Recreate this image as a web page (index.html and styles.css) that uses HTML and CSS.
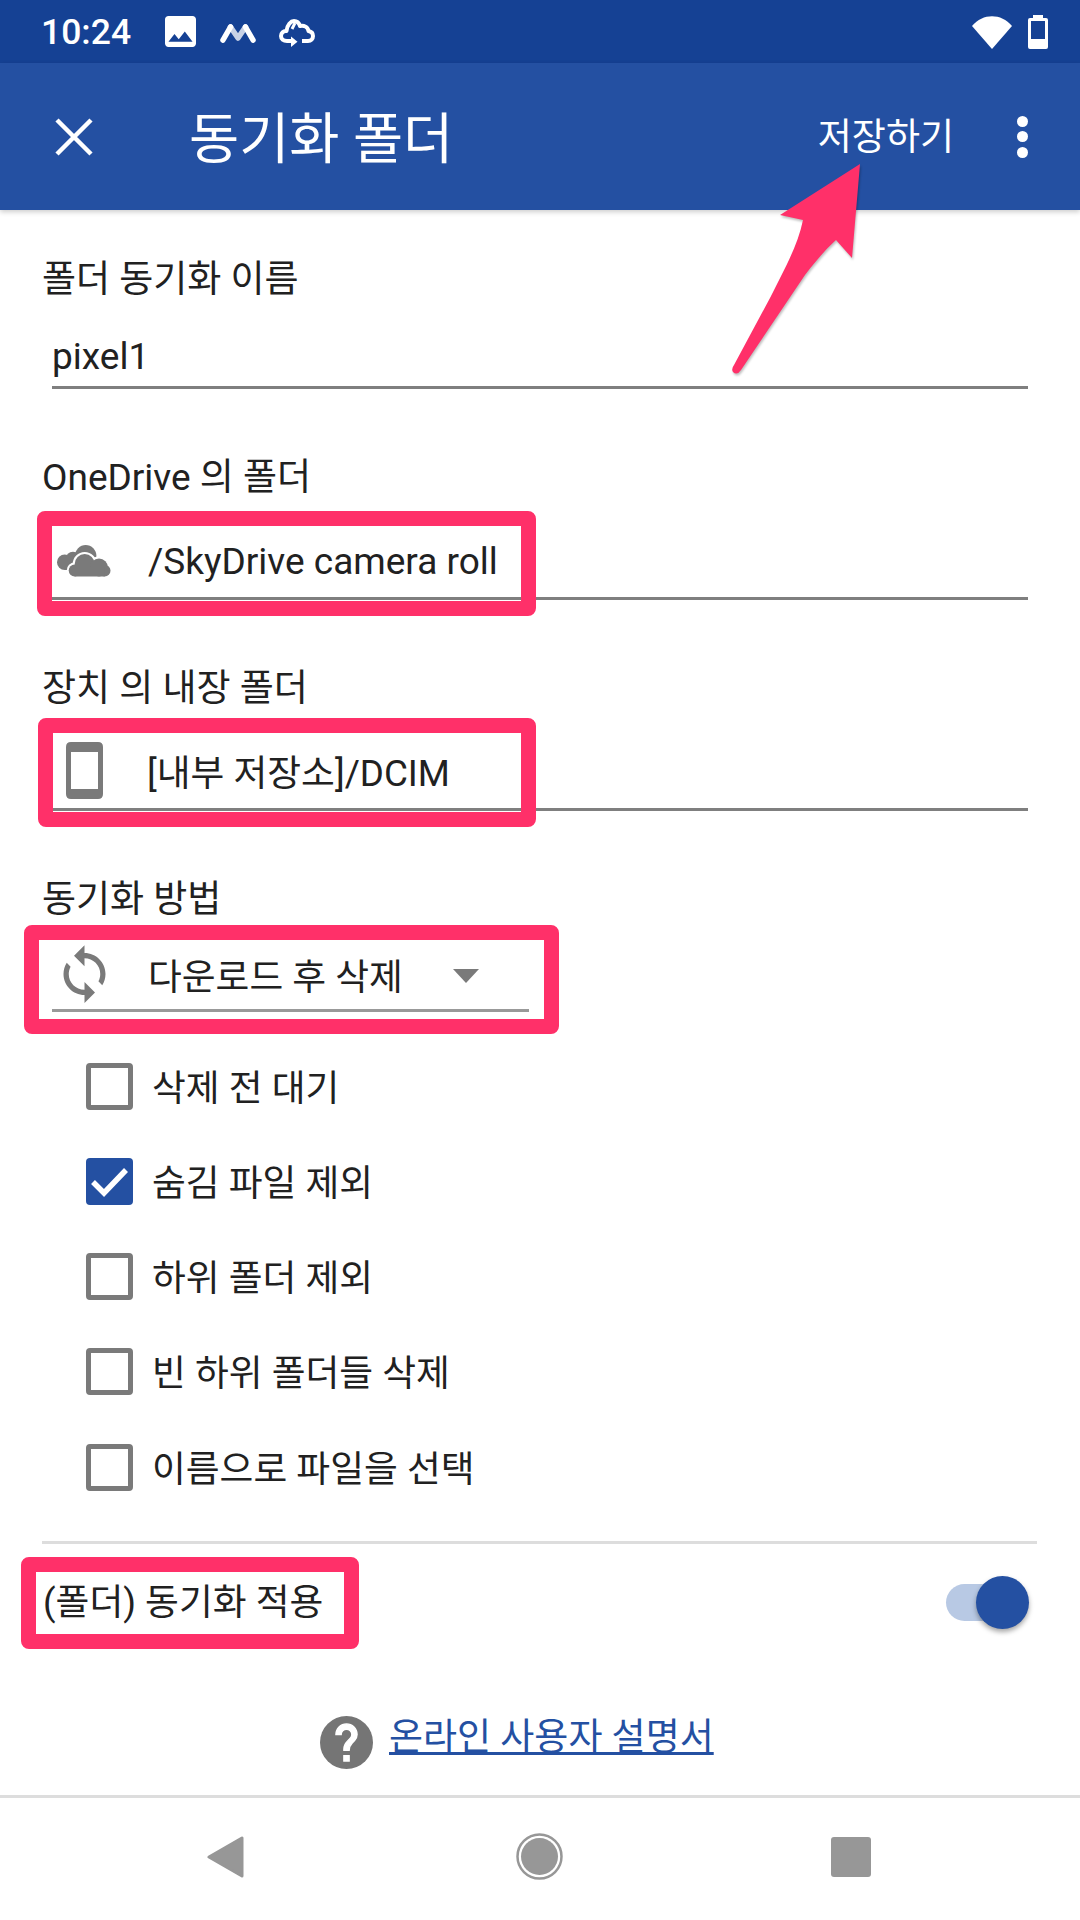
FILE: index.html

```html
<!DOCTYPE html>
<html lang="ko">
<head>
  <meta charset="UTF-8" />
  <meta name="viewport" content="width=device-width, initial-scale=1.0"/>
  <title>동기화 폴더</title>
  <link rel="stylesheet" href="styles.css">
</head>
<body>

  <div class="status-bar">
    <span class="clock">10:24</span>
    <svg class="st-image" viewBox="3 3 18 18"><path fill="#fff" fill-rule="evenodd" d="M21 19V5c0-1.100-.9-2-2-2H5c-1.100 0-2 .9-2 2v14c0 1.100.9 2 2 2h14c1.100 0 2-.9 2-2zM8.500 13.500l2.500 3.010L14.500 12l4.500 6H5l3.500-4.500z"/></svg>
    <svg class="st-m" viewBox="0 0 36 22" fill="none" stroke-width="5.500" stroke-linecap="round" stroke-linejoin="round">
      <path stroke="#c8d2e6" d="M10.500 6L18 17L25.500 6"/>
      <path stroke="#fff" d="M3 19L10.500 6"/>
      <path stroke="#fff" d="M33 19L25.500 6"/>
    </svg>
    <svg class="st-cloud" viewBox="0 0 36 30" fill="none" stroke="#fff" stroke-width="4" stroke-linejoin="round">
      <path d="M12 24H8C4.500 24 2 22 2 19C2 16 4.500 13.500 7.500 14C8 8 12 4 15 4C18 4 20 6 21 9C25 8 29 10 29.500 14C32 14.500 34 16.500 34 19C34 22 32 24 29 24H23"/>
      <path stroke-width="3" d="M16 6L13 12"/>
      <path fill="#fff" stroke="none" d="M12 19.500L18.500 24.800L12 30Z"/>
    </svg>
    <div class="status-right">
      <svg class="st-wifi" viewBox="0 0 40 34"><path fill="#fff" d="M0 11C11 -2 29 -2 40 11L20 34Z"/></svg>
      <svg class="st-battery" viewBox="0 0 20 34"><path fill="#fff" fill-rule="evenodd" d="M5 0H15V3H18Q20 3 20 5V32Q20 34 18 34H2Q0 34 0 32V5Q0 3 2 3H5ZM3 6V24H17V6Z"/></svg>
    </div>
  </div>

  <div class="app-bar">
    <svg class="close-icon" viewBox="0 0 38 38" fill="none" stroke="#fff" stroke-width="4.500"><path d="M2 2L36 36M36 2L2 36"/></svg>
    <span class="app-title">동기화 폴더</span>
    <span class="app-action">저장하기</span>
    <div class="more-dots"><i></i><i></i><i></i></div>
  </div>

  <div class="form">
    <div class="field field-name">
      <div class="field-label">폴더 동기화 이름</div>
      <div class="input">pixel1</div>
    </div>

    <div class="field field-cloud">
      <div class="field-label">OneDrive 의 폴더</div>
      <div class="input">
        <div class="input-icon">
          <svg width="54" height="32" viewBox="0 0 54 32" fill="#7a7a7a">
            <defs>
              <g id="front-cloud">
                <circle cx="17.700" cy="25.500" r="6"/>
                <circle cx="27.700" cy="19" r="10"/>
                <circle cx="42" cy="22.500" r="9"/>
                <circle cx="47.700" cy="25.700" r="5.800"/>
                <rect x="17.700" y="22" width="30" height="9.500"/>
              </g>
            </defs>
            <circle cx="7.700" cy="17.300" r="7.700"/>
            <circle cx="16" cy="14" r="7.300"/>
            <circle cx="28.700" cy="10.700" r="10.700"/>
            <rect x="8" y="14" width="24" height="11"/>
            <use href="#front-cloud" stroke="#fff" stroke-width="4"/>
            <use href="#front-cloud"/>
          </svg>
        </div>
        <span>/SkyDrive camera roll</span>
      </div>
    </div>

    <div class="field field-device">
      <div class="field-label">장치 의 내장 폴더</div>
      <div class="input">
        <div class="input-icon">
          <svg width="37" height="57" viewBox="0 0 37 57"><path fill="#7a7a7a" fill-rule="evenodd" d="M5 0H32Q37 0 37 5V52Q37 57 32 57H5Q0 57 0 52V5Q0 0 5 0ZM5 10V47H32V10Z"/></svg>
        </div>
        <span class="value-ko">[내부 저장소]/DCIM</span>
      </div>
    </div>

    <div class="field field-method">
      <div class="field-label">동기화 방법</div>
      <div class="input">
        <div class="input-icon">
          <svg class="sync-icon" width="64" height="64" viewBox="0 0 24 24"><path fill="#7a7a7a" d="M12 4V1L8 5l4 4V6c3.310 0 6 2.690 6 6 0 1.010-.25 1.970-.7 2.800l1.460 1.460C19.540 15.030 20 13.570 20 12c0-4.420-3.580-8-8-8zm0 14c-3.310 0-6-2.690-6-6 0-1.010.25-1.970.7-2.800L5.240 7.740C4.460 8.970 4 10.430 4 12c0 4.420 3.580 8 8 8v3l4-4-4-4v3z"/></svg>
        </div>
        <span class="method-value">다운로드 후 삭제</span>
        <i class="select-arrow"></i>
      </div>
    </div>

    <div class="checks">
      <div class="check-row"><i class="checkbox"></i><span>삭제 전 대기</span></div>
      <div class="check-row">
        <i class="checkbox checked">
          <svg width="47" height="47" viewBox="0 0 47 47" fill="none" stroke="#fff" stroke-width="5.500"><path d="M7 24L18 35L40 12"/></svg>
        </i><span>숨김 파일 제외</span>
      </div>
      <div class="check-row"><i class="checkbox"></i><span>하위 폴더 제외</span></div>
      <div class="check-row"><i class="checkbox"></i><span>빈 하위 폴더들 삭제</span></div>
      <div class="check-row"><i class="checkbox"></i><span>이름으로 파일을 선택</span></div>
    </div>

    <div class="divider"></div>

    <div class="toggle-row">
      <span class="toggle-label">(폴더) 동기화 적용</span>
      <div class="switch"><i class="switch-track"></i><i class="switch-thumb"></i></div>
    </div>
  </div>

  <div class="help">
    <svg width="53" height="53" viewBox="2 2 20 20">
      <circle cx="12" cy="12" r="10" fill="#757575"/>
      <path fill="#fff" stroke="#fff" stroke-width=".5" d="M13 19h-2v-2h2v2zm2.070-7.750l-.9.920C13.450 12.900 13 13.500 13 15h-2v-.5c0-1.100.45-2.100 1.170-2.830l1.240-1.260c.37-.36.59-.86.59-1.410 0-1.100-.9-2-2-2s-2 .9-2 2H8c0-2.210 1.790-4 4-4s4 1.790 4 4c0 .88-.36 1.680-.93 2.250z"/>
    </svg>
    <a class="help-link">온라인 사용자 설명서</a>
  </div>

  <div class="nav-bar">
    <svg class="nav-back" viewBox="0 0 37 42"><path fill="#979797" stroke="#979797" stroke-width="3" stroke-linejoin="round" d="M35 2V40L2 21Z"/></svg>
    <svg class="nav-home" viewBox="0 0 47 47">
      <circle cx="23.500" cy="23.500" r="22" fill="none" stroke="#979797" stroke-width="2.500"/>
      <circle cx="23.500" cy="23.500" r="18.500" fill="#979797"/>
    </svg>
    <i class="nav-recent"></i>
  </div>

  <!-- annotations drawn over the screenshot -->
  <i class="mark mark-onedrive"></i>
  <i class="mark mark-device"></i>
  <i class="mark mark-method"></i>
  <i class="mark mark-apply"></i>
  <svg class="pointer-arrow" viewBox="700 150 180 240">
    <path fill="#ff3069" d="M860 164L852 258L836 240C825 250 815 262 805 275L741 370Q737 376 733 372Q731 369 734 365L770 298C785 268 798 245 803 220L780 215Z"/>
  </svg>

</body>
</html>
```

FILE: styles.css

```css
html, body {
  margin: 0;
  padding: 0;
}
body {
  position: relative;
  width: 1080px;
  height: 1920px;
  overflow: hidden;
  background: #fff;
  color: #212121;
  font-family: Roboto, "Noto Sans CJK KR", sans-serif;
  font-size: 37px;
}
i {
  display: block;
  font-style: normal;
}

/* status bar */
.status-bar {
  display: flex;
  align-items: center;
  height: 63px;
  padding: 0 30px 0 41px;
  background: #154194;
  color: #fff;
}
.clock {
  width: 90px;
  font-size: 35.500px;
  font-weight: 500;
}
.st-image {
  width: 31px;
  height: 31px;
  margin-left: 34px;
}
.st-m {
  width: 36px;
  height: 22px;
  margin-left: 24px;
}
.st-cloud {
  width: 36px;
  height: 30px;
  margin-left: 23px;
}
.status-right {
  display: flex;
  align-items: center;
  gap: 16px;
  margin-left: auto;
}
.st-wifi {
  width: 40px;
  height: 34px;
}
.st-battery {
  width: 20px;
  height: 34px;
  margin-right: 2px;
}

/* app bar */
.app-bar {
  position: relative;
  display: flex;
  align-items: center;
  height: 147px;
  padding: 0 52px 0 55px;
  background: #2450a2;
  color: #fff;
  box-shadow: 0 2px 5px rgba(0, 0, 0, .2);
}
.close-icon {
  width: 38px;
  height: 38px;
}
.app-title {
  margin: 0 0 5px 96px;
  font-size: 54.500px;
}
.app-action {
  margin: 0 0 6px auto;
}
.more-dots {
  display: flex;
  flex-direction: column;
  gap: 4.500px;
  margin-left: 63px;
}
.more-dots i {
  width: 11px;
  height: 11px;
  border-radius: 50%;
  background: #fff;
}

/* form */
.form {
  padding: 45px 43px 0 42px;
}
.field-label {
  height: 50px;
  line-height: 50px;
}
.input {
  display: flex;
  align-items: center;
  height: 60px;
  margin: 0 9px 0 10px;
  border-bottom: 3px solid #7f7f7f;
}
.field-name {
  margin-bottom: 64px;
}
.field-name .input {
  margin-top: 21px;
}
.field-cloud {
  margin-bottom: 64px;
}
.field-cloud .input {
  margin-top: 28px;
  padding-bottom: 6px;
}
.field-device {
  margin-bottom: 64px;
}
.field-device .input {
  margin-top: 26px;
  padding-bottom: 8px;
}
.field-method .input {
  width: 477px;
  margin-top: 19px;
  padding-bottom: 5px;
  border-bottom-color: #999;
}
.input-icon {
  display: flex;
  align-items: center;
  justify-content: center;
  width: 64px;
  margin-right: 32px;
}
.value-ko {
  margin-left: -1px;
  font-size: 36.750px;
}
.method-value {
  font-size: 36.750px;
}
.sync-icon {
  margin-left: 1px;
}
.select-arrow {
  width: 0;
  height: 0;
  margin: 4px 0 0 50px;
  border-left: 13px solid transparent;
  border-right: 13px solid transparent;
  border-top: 14px solid #7a7a7a;
}

/* checkboxes */
.checks {
  margin-top: 26.500px;
  padding-left: 44px;
  font-size: 36.750px;
}
.check-row {
  display: flex;
  align-items: center;
  height: 95.250px;
}
.check-row span {
  margin-bottom: 3px;
}
.checkbox {
  box-sizing: border-box;
  width: 47px;
  height: 47px;
  margin-right: 19px;
  border: 5px solid #7a7a7a;
  border-radius: 4px;
}
.checked {
  border: 0;
  background: #2450a2;
}
.checked svg {
  display: block;
}

.divider {
  height: 3px;
  margin-top: 26px;
  background: #ddd;
}
.toggle-row {
  display: flex;
  align-items: center;
  justify-content: space-between;
  height: 116px;
  padding-left: 1px;
}
.toggle-label {
  margin-bottom: 5px;
  font-size: 36.750px;
}
.switch {
  position: relative;
  width: 83px;
  height: 53px;
  margin: 2px 8px 0 0;
}
.switch-track {
  position: absolute;
  left: 0;
  top: 8px;
  width: 60px;
  height: 37px;
  border-radius: 19px;
  background: #b8c9e4;
}
.switch-thumb {
  position: absolute;
  right: 0;
  top: 0;
  width: 53px;
  height: 53px;
  border-radius: 50%;
  background: #2450a2;
  box-shadow: 0 3px 5px rgba(0, 0, 0, .35);
}

/* help link */
.help {
  display: flex;
  align-items: center;
  gap: 16px;
  box-sizing: border-box;
  height: 135px;
  padding: 30px 0 0 320px;
}
.help-link {
  margin-bottom: 16px;
  color: #2450a2;
  text-decoration: underline;
}

/* nav bar */
.nav-bar {
  display: flex;
  align-items: center;
  box-sizing: border-box;
  height: 125px;
  padding: 0 0 4px 207px;
  border-top: 3px solid #ddd;
}
.nav-back {
  width: 37px;
  height: 42px;
}
.nav-home {
  width: 47px;
  height: 47px;
  margin: 0 268px 0 272px;
}
.nav-recent {
  width: 40px;
  height: 40px;
  border-radius: 3px;
  background: #979797;
}

/* pink annotations */
.mark {
  position: absolute;
  box-sizing: border-box;
  border: 15px solid #ff3069;
  border-radius: 8px;
}
.mark-onedrive {
  left: 37px;
  top: 511px;
  width: 499px;
  height: 105px;
}
.mark-device {
  left: 38px;
  top: 718px;
  width: 498px;
  height: 109px;
}
.mark-method {
  left: 24px;
  top: 925px;
  width: 535px;
  height: 109px;
}
.mark-apply {
  left: 21px;
  top: 1557px;
  width: 338px;
  height: 92px;
}
.pointer-arrow {
  position: absolute;
  left: 700px;
  top: 150px;
  width: 180px;
  height: 240px;
  filter: drop-shadow(1px 2px 1px rgba(0, 0, 0, .25));
}
```
